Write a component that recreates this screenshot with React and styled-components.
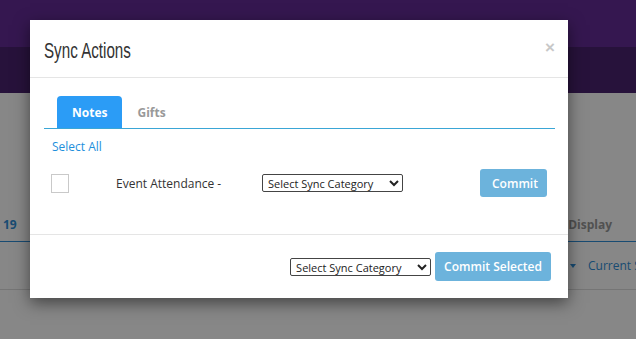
import React, { useState } from 'react';
import styled, { createGlobalStyle } from 'styled-components';

const GlobalStyle = createGlobalStyle`
  html, body {
    margin: 0;
    padding: 0;
    width: 636px;
    height: 339px;
    overflow: hidden;
    font-family: "Open Sans", "Liberation Sans", sans-serif;
  }
`;

const Page = styled.div`
  position: relative;
  width: 636px;
  height: 339px;
  background: #ffffff;
  overflow: hidden;
`;

const TopBar = styled.div`
  height: 47px;
  background: #642c98;
`;

const SubBar = styled.div`
  height: 46px;
  background: #4a2270;
`;

const TabStrip = styled.div`
  display: flex;
  justify-content: space-between;
  align-items: flex-end;
  height: 149px;
  border-bottom: 1px solid #2f8fd8;
  box-sizing: border-box;
  padding: 0 24px 8px 3px;
`;

const PageTab = styled.span`
  font-size: 12px;
  font-weight: 700;
  color: ${({ active }) => (active ? '#2f8fd8' : '#999')};
`;

const FilterRow = styled.div`
  display: flex;
  align-items: center;
  gap: 12px;
  height: 47px;
  border-bottom: 1px solid #ddd;
  padding-left: 570px;
  white-space: nowrap;
  overflow: hidden;
  font-size: 12px;
  color: #2f8fd8;
`;

const Caret = styled.span`
  flex: none;
  width: 0;
  height: 0;
  border-left: 3px solid transparent;
  border-right: 3px solid transparent;
  border-top: 4px solid #2f8fd8;
`;

const Overlay = styled.div`
  position: absolute;
  inset: 0;
  background: rgba(0, 0, 0, 0.47);
`;

const Modal = styled.div`
  position: absolute;
  left: 30px;
  top: 20px;
  width: 538px;
  height: 278px;
  background: #fff;
  box-shadow: 0 5px 15px rgba(0, 0, 0, 0.5);
  display: flex;
  flex-direction: column;
`;

const Header = styled.div`
  display: flex;
  justify-content: space-between;
  align-items: flex-start;
  height: 58px;
  box-sizing: border-box;
  padding: 19px 13px 0 14px;
  border-bottom: 1px solid #e5e5e5;
`;

const Title = styled.h4`
  margin: 0;
  font-family: "Liberation Sans", sans-serif;
  font-weight: 400;
  font-size: 22px;
  line-height: 24px;
  color: #333;
  transform: scaleX(0.69);
  transform-origin: left center;
`;

const Close = styled.button`
  border: none;
  background: none;
  padding: 0;
  margin-top: 1px;
  font-family: "Liberation Sans", sans-serif;
  font-size: 17px;
  font-weight: 700;
  line-height: 16px;
  color: #c8c8c8;
  cursor: pointer;
`;

const Body = styled.div`
  height: 157px;
  box-sizing: border-box;
  padding: 18px 13px 0 14px;
  border-bottom: 1px solid #e5e5e5;
`;

const TabNav = styled.div`
  display: flex;
  padding-left: 13px;
  border-bottom: 1px solid #3aa6d6;
`;

const Tab = styled.button`
  height: 32px;
  border: none;
  border-radius: 4px 4px 0 0;
  padding: 0 15px;
  font-family: "Open Sans", sans-serif;
  font-size: 12px;
  font-weight: 700;
  background: ${({ active }) => (active ? '#2b9cf6' : 'transparent')};
  color: ${({ active }) => (active ? '#fff' : '#999')};
  cursor: pointer;
`;

const SelectAll = styled.a`
  display: block;
  margin: 10px 0 0 8px;
  font-size: 12px;
  line-height: 16px;
  color: #1e8fdc;
  cursor: pointer;
`;

const ItemRow = styled.div`
  display: grid;
  grid-template-columns: 72px 146px 218px 67px;
  align-items: center;
  margin-top: 14px;
  height: 28px;
`;

const Check = styled.span`
  display: block;
  width: 18px;
  height: 19px;
  margin-left: 7px;
  box-sizing: border-box;
  border: 1px solid #c9c9c9;
  background: #fff;
`;

const Label = styled.span`
  font-size: 12px;
  color: #333;
`;

const CategorySelect = styled.select`
  width: 141px;
  height: 18px;
  font-family: "Open Sans", sans-serif;
  font-size: 11px;
  padding: 0 1px;
  border: 1px solid #444;
  border-radius: 2px;
  background: #fff;
  color: #222;
`;

const CommitButton = styled.button`
  height: ${({ tall }) => (tall ? '29px' : '28px')};
  padding: 0 ${({ tall }) => (tall ? '9px' : '12px')};
  border: none;
  border-radius: 3px;
  background: #6cb3dc;
  color: #fff;
  font-family: "Open Sans", sans-serif;
  font-size: 12px;
  font-weight: 600;
  cursor: pointer;
  white-space: nowrap;
`;

const Footer = styled.div`
  display: flex;
  justify-content: flex-end;
  align-items: center;
  gap: 4px;
  padding: 17px 17px 0 0;
`;

export default function App() {
  const [tab, setTab] = useState('notes');

  return (
    <Page>
      <GlobalStyle />
      <TopBar />
      <SubBar />
      <TabStrip>
        <PageTab active>19</PageTab>
        <PageTab>Display</PageTab>
      </TabStrip>
      <FilterRow>
        <Caret />
        <span>Current Status</span>
      </FilterRow>

      <Overlay>
        <Modal>
          <Header>
            <Title>Sync Actions</Title>
            <Close>×</Close>
          </Header>
          <Body>
            <TabNav>
              <Tab active={tab === 'notes'} onClick={() => setTab('notes')}>Notes</Tab>
              <Tab active={tab === 'gifts'} onClick={() => setTab('gifts')}>Gifts</Tab>
            </TabNav>
            <SelectAll>Select All</SelectAll>
            <ItemRow>
              <Check />
              <Label>Event Attendance -</Label>
              <CategorySelect defaultValue="">
                <option value="">Select Sync Category</option>
              </CategorySelect>
              <CommitButton>Commit</CommitButton>
            </ItemRow>
          </Body>
          <Footer>
            <CategorySelect defaultValue="">
              <option value="">Select Sync Category</option>
            </CategorySelect>
            <CommitButton tall>Commit Selected</CommitButton>
          </Footer>
        </Modal>
      </Overlay>
    </Page>
  );
}
